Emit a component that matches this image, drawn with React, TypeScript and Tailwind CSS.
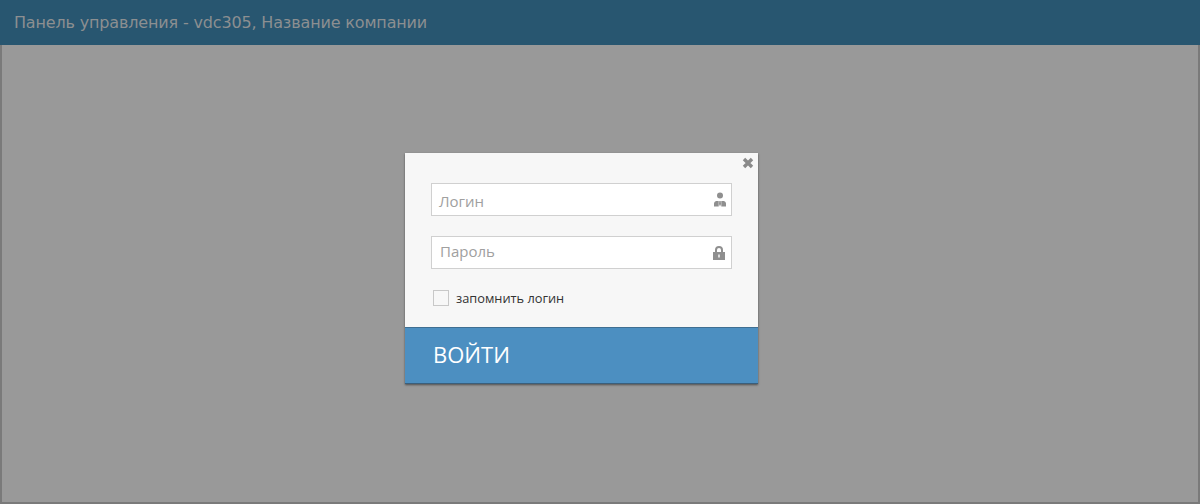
const App = () => {
  return (
    <div className="flex h-[504px] w-[1200px] flex-col overflow-hidden bg-[#999999]">
      {/* Header */}
      <div className="flex h-[45px] shrink-0 items-center bg-[#285670] pl-[14px] font-['DejaVu_Sans',sans-serif] text-[16px] tracking-[-0.16px] text-[#8c8f91]">
        Панель управления - vdc305, Название компании
      </div>

      {/* Dimmed page */}
      <div className="flex flex-1 items-center justify-center border-2 border-t-0 border-[#7a7a7a] pb-[10px] pr-[37px]">
        <div className="relative w-[353px] bg-[#f7f7f7] font-['Open_Sans',sans-serif] shadow-[0_1px_2px_rgba(0,0,0,0.5)]">
          <button className="absolute right-[4px] top-[4px] text-[#8a8a8a]">
            <svg width="12" height="12" viewBox="0 0 12 12" fill="none" stroke="currentColor" strokeWidth="3.4">
              <path d="M2 2l8 8M10 2l-8 8" />
            </svg>
          </button>

          <div className="flex flex-col px-[26px] pt-[30px]">
            <div className="flex h-[33px] items-center justify-between border border-[#d0d0d0] bg-white pl-[7px] pr-[5px] text-[15px] text-[#a0a0a0]">
              <span className="pt-[4px]">Логин</span>
              <svg width="12" height="15" viewBox="0 0 12 15" fill="#8f8f8f">
                <circle cx="6" cy="3.500" r="3" />
                <path d="M0 14.500v-3q0-2 2-2.500h2.700v5.500zM7.300 9H10q2 .5 2 2.500v3H7.300zM5.300 9h1.400l.3 3-1 2.500-1-2.500z" />
              </svg>
            </div>
            <div className="mt-[20px] flex h-[33px] items-center justify-between border border-[#d0d0d0] bg-white pl-[7px] pr-[6px] text-[15px] text-[#a0a0a0]">
              <span className="pb-[3px] pl-[1px]">Пароль</span>
              <svg width="12" height="14" viewBox="0 0 12 14" fill="#8f8f8f">
                <path fillRule="evenodd" d="M2 6V4a4 4 0 0 1 8 0v2h2v8H0V6zM4 6h4V4a2 2 0 0 0-4 0zM5.300 8.500v3h1.400v-3z" />
              </svg>
            </div>
            <label className="mt-[21px] flex h-[16px] items-center gap-[7px] pl-[2px] text-[12.8px] leading-[16px] text-[#333333]">
              <span className="h-[16px] w-[16px] border border-[#c8c8c8] bg-[#f7f7f7]" />
              запомнить логин
            </label>
          </div>

          <button className="mt-[21px] flex h-[57px] w-full items-center border-y border-t-[#3f6f92] border-b-[#3a5f7c] bg-[#4c8fc1] pb-[2px] pl-[28px] text-[22px] text-white">
            ВОЙТИ
          </button>
        </div>
      </div>
    </div>
  );
};

export default App;
